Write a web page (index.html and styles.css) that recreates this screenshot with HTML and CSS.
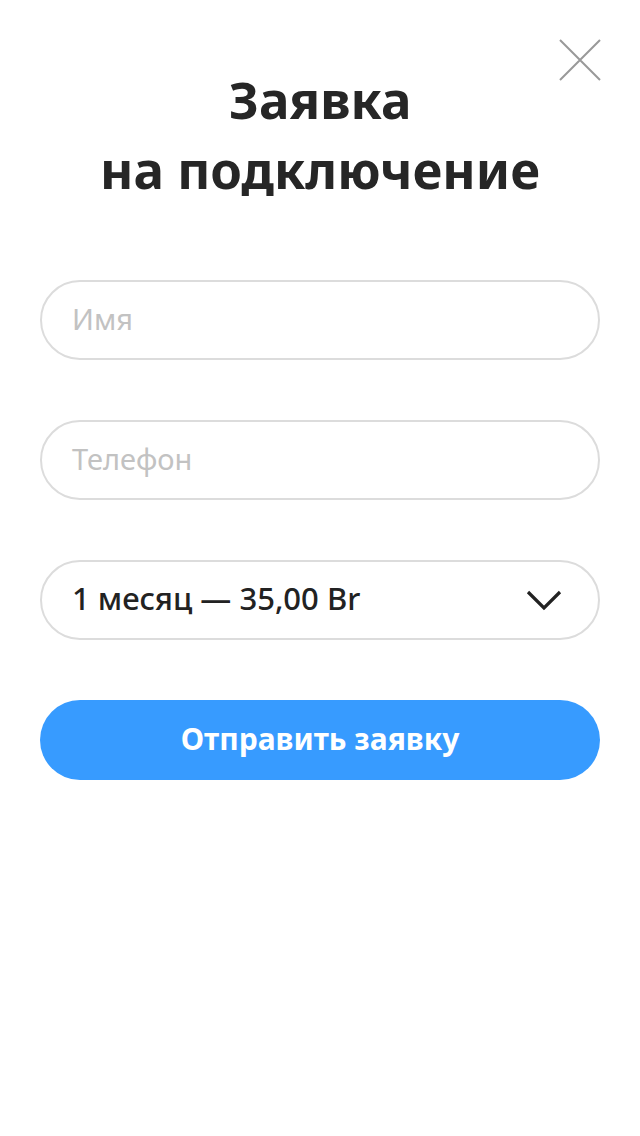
FILE: index.html
```html
<!DOCTYPE html>
<html lang="ru">
<head>
<meta charset="utf-8">
<link rel="stylesheet" href="styles.css">
</head>
<body>
<div class="page">
  <button class="close" aria-label="Закрыть">
    <svg width="42" height="42" viewBox="0 0 42 42"><path d="M1 1 L41 41 M41 1 L1 41" stroke="#999" stroke-width="2" fill="none"/></svg>
  </button>
  <h1 class="title">Заявка<br>на подключение</h1>
  <form class="form">
    <div class="field"><span class="placeholder">Имя</span></div>
    <div class="field"><span class="placeholder">Телефон</span></div>
    <div class="field select">
      <span class="value">1 месяц — 35,00 Br</span>
      <svg class="chev" width="36" height="22" viewBox="0 0 36 22"><path d="M2 3 L18 19 L34 3" stroke="#222" stroke-width="3.2" fill="none"/></svg>
    </div>
    <div class="submit">Отправить заявку</div>
  </form>
</div>
</body>
</html>
```
FILE: styles.css
```css
html, body {
  margin: 0;
  padding: 0;
  background: #fff;
}
body {
  font-family: "Noto Sans", "DejaVu Sans", sans-serif;
}
.page {
  position: relative;
  width: 640px;
  height: 1136px;
  padding: 0 40px;
  box-sizing: border-box;
}
.close {
  position: absolute;
  top: 39px;
  left: 559px;
  padding: 0;
  margin: 0;
  border: 0;
  background: none;
  line-height: 0;
}
.title {
  margin: 0;
  padding-top: 64px;
  text-align: center;
  font-size: 51px;
  line-height: 70px;
  font-weight: 700;
  color: #262626;
}
.form {
  display: flex;
  flex-direction: column;
  gap: 60px;
  margin-top: 76px;
}
.field {
  height: 80px;
  border: 2px solid #dcdcdc;
  border-radius: 40px;
  box-sizing: border-box;
  display: flex;
  align-items: center;
  padding: 0 36px 4px 30px;
  font-size: 29px;
}
.placeholder {
  color: #c2c2c2;
}
.select {
  justify-content: space-between;
}
.select .chev {
  margin-top: 4px;
}
.value {
  color: #222;
  font-size: 31px;
  font-weight: 500;
}
.submit {
  height: 80px;
  border-radius: 40px;
  background: #379bff;
  color: #fff;
  display: flex;
  align-items: center;
  justify-content: center;
  padding-bottom: 4px;
  box-sizing: border-box;
  font-size: 30px;
  font-weight: 700;
}
```
